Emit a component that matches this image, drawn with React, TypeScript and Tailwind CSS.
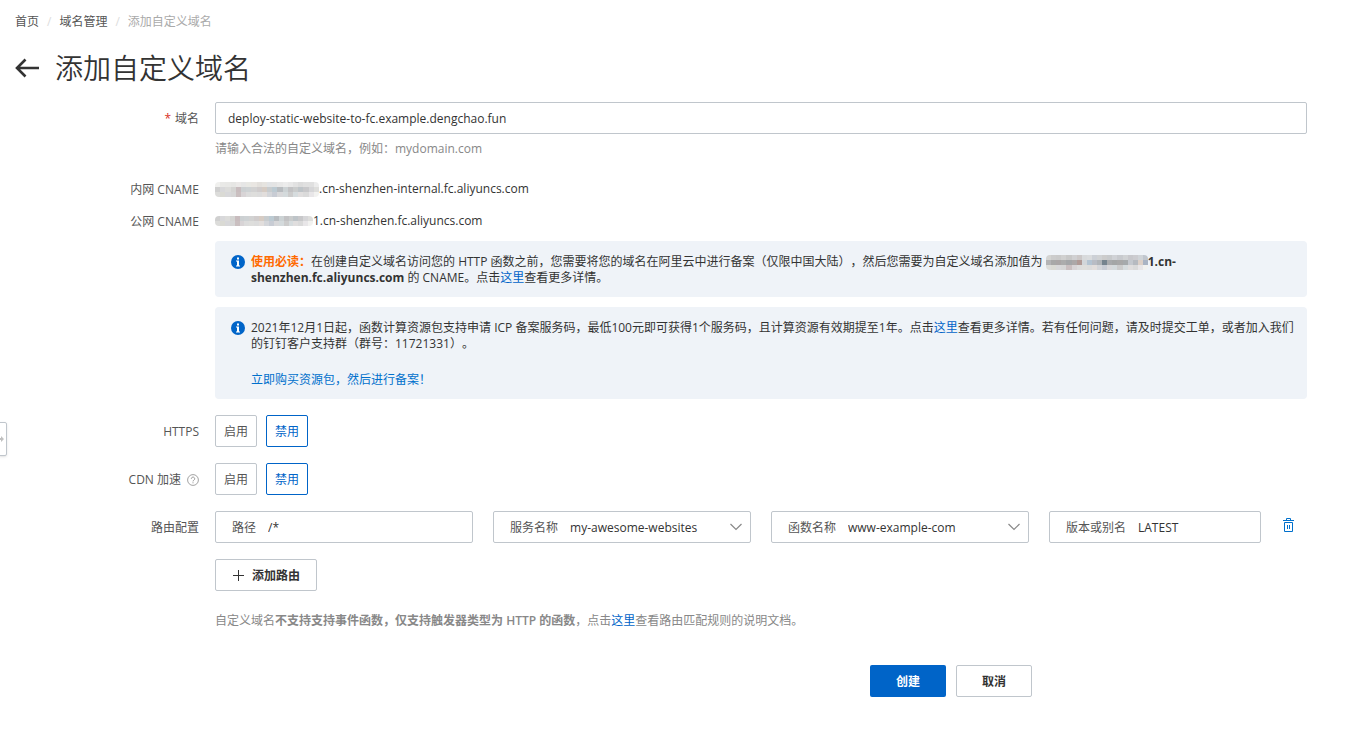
import React, { useState } from 'react';

interface FormRowProps {
  label?: React.ReactNode;
  htmlFor?: string;
  className?: string;
  children: React.ReactNode;
}

const FormRow: React.FC<FormRowProps> = ({ label, htmlFor, className = '', children }) => (
  <div className={`flex gap-4 ${className}`}>
    <label htmlFor={htmlFor} className="flex h-8 w-46 shrink-0 items-center justify-end pt-0.5 text-[#555]">
      {label}
    </label>
    <div className="min-w-0 flex-1">{children}</div>
  </div>
);

// Masked account id, drawn as a grid of grey blocks
const MASK_LIGHT = ['#f0f0ee', '#e9e9e7', '#e8e8e6', '#e6e6e4', '#ebe9e8', '#e6e6e6', '#e8e8e4', '#e9e6e2', '#e3e0dc', '#e6e4e0', '#e2e4e6', '#e4e4e4', '#e8e8e8', '#ececec', '#e8e8e8', '#e2e2e2', '#dcdcdc', '#e0e0e0', '#e0e0e0', '#ececec'];
const MASK_MIDDLE = ['#d0d0d0', '#d8d8da', '#dcdcda', '#d4d4d2', '#c8bcbe', '#ccd0d2', '#ced2d4', '#d2d2d2', '#d0cccc', '#d6ccc4', '#c8ccce', '#bccad2', '#b8bcc0', '#ccd2d4', '#c2c2c4', '#cacccc', '#bec4c8', '#c8c8ca', '#d6d6d8', '#dededc'];
const MASK_BOTTOM = ['#dcdcda', '#dadad4', '#d8d8da', '#d6d6d6', '#cabfc0', '#d8d4d6', '#dcdcdc', '#dededc', '#dcdcdc', '#e2dedc', '#d4d6da', '#c8ccd4', '#d8d8da', '#d4dadc', '#cccccc', '#d6dcde', '#e0dede', '#dadada', '#e8e6e8', '#f2f2f0'];
const MASK_BOLD_TOP = ['#d4d4d2', '#cccccc', '#cacaca', '#d0d0d0', '#c8c8c8', '#d0d0d2', '#ccc8c8', '#d8dadc', '#dadcde', '#ccd0d6', '#d0d2d4', '#cccccc', '#c8cacc', '#d0d2d6', '#c8cace', '#d0d2d4', '#c8c8cc', '#ccccd0', '#d0d4d8', '#c0c6ce'];
const MASK_BOLD_MIDDLE = ['#b4b4b6', '#a8a8a8', '#aaa6a6', '#acacac', '#a4a6a8', '#aca8a8', '#b09a96', '#d2d6da', '#b4c4d2', '#b8bcc4', '#b0b4b8', '#76848e', '#a8aaac', '#a4a6a6', '#a8a8a8', '#a6aaac', '#c4c8ce', '#b6bac0', '#dcd0c8', '#aab4c4'];

const MASK_INTERNAL = [MASK_LIGHT, MASK_MIDDLE, MASK_BOTTOM];
const MASK_PUBLIC = [MASK_MIDDLE, MASK_BOTTOM];
const MASK_NOTICE = [MASK_BOLD_TOP, MASK_BOLD_MIDDLE, MASK_BOTTOM];

const Mask: React.FC<{ rows: string[][]; width?: number }> = ({ rows, width = 104 }) => (
  <svg
    viewBox={`0 0 100 ${rows.length * 5}`}
    preserveAspectRatio="none"
    width={width}
    height={rows.length * 5}
    shapeRendering="crispEdges"
    className="inline-block rounded-sm align-middle"
    aria-hidden="true"
  >
    {rows.map((row, y) =>
      row.map((fill, x) => <rect key={`${y}-${x}`} x={x * 5} y={y * 5} width="5" height="5" fill={fill} />)
    )}
  </svg>
);

const InfoIcon = () => (
  <svg viewBox="0 0 14 14" className="mt-px size-3.5 shrink-0" aria-hidden="true">
    <circle cx="7" cy="7" r="7" fill="#0064c8" />
    <path d="M6 2.5h2v2H6zM5 5.5h3v5h1v1H5v-1h1v-4H5z" fill="#fff" />
  </svg>
);

const HelpIcon = () => (
  <svg viewBox="0 0 12 12" className="ml-1.5 size-3" fill="none" stroke="#999" aria-hidden="true">
    <circle cx="6" cy="6" r="5.4" strokeWidth="0.9" />
    <path d="M4.3 4.8a1.7 1.7 0 1 1 2.6 1.4C6.3 6.5 6 6.7 6 7.4M6 8.3v1" />
  </svg>
);

const Notice: React.FC<{ children: React.ReactNode }> = ({ children }) => (
  <div className="flex gap-1.5 rounded-sm bg-[#eff3f8] pt-[13px] pr-3 pb-[11px] pl-4 leading-4 text-[#333]">
    <InfoIcon />
    <div className="min-w-0 flex-1">{children}</div>
  </div>
);

interface ToggleProps {
  name: string;
  value: boolean;
  onChange: (value: boolean) => void;
}

const Toggle: React.FC<ToggleProps> = ({ name, value, onChange }) => (
  <div role="group" aria-label={name} className="flex gap-[9px]">
    {[true, false].map(option => (
      <button
        key={String(option)}
        type="button"
        aria-pressed={value === option}
        onClick={() => onChange(option)}
        className={`h-8 w-[42px] rounded-xs border pt-0.5 ${value === option ? 'border-[#0064c8] text-[#0064c8]' : 'border-[#c0c6cc] text-[#555]'}`}
      >
        {option ? '启用' : '禁用'}
      </button>
    ))}
  </div>
);

const fieldStyle = 'flex h-8 items-center gap-3 rounded-xs border border-[#c0c6cc] pt-0.5 pl-4';

interface SelectFieldProps {
  id: string;
  label: string;
  value: string;
}

const SelectField: React.FC<SelectFieldProps> = ({ id, label, value }) => (
  <div className={`${fieldStyle} relative min-w-0 flex-1`}>
    <label htmlFor={id} className="shrink-0 text-[#555]">{label}</label>
    <select id={id} className="h-full min-w-0 flex-1 appearance-none bg-transparent pr-8 text-[#333] outline-none">
      <option>{value}</option>
    </select>
    <svg viewBox="0 0 12 8" className="pointer-events-none absolute top-[11px] right-2 h-2 w-3" fill="none" stroke="#888" strokeWidth="1.2" aria-hidden="true">
      <path d="M.5 1 6 6.5 11.5 1" />
    </svg>
  </div>
);

const linkStyle = 'text-[#0064c8]';

export default function App() {
  const [domain, setDomain] = useState('deploy-static-website-to-fc.example.dengchao.fun');
  const [path, setPath] = useState('/*');
  const [version, setVersion] = useState('LATEST');
  const [https, setHttps] = useState(false);
  const [cdn, setCdn] = useState(false);

  return (
    <div className="min-h-screen bg-white pr-[55px] pb-10 pl-[15px] font-['Open_Sans','Noto_Sans_CJK_SC',sans-serif] text-[12px] leading-4 text-[#333] [text-spacing-trim:space-all]">
      <button type="button" aria-label="展开" className="fixed top-[422px] -left-px flex h-[34px] w-2 items-center rounded-r-xs border border-[#c0c6cc] bg-white shadow">
        <svg viewBox="0 0 4 6" className="h-1.5 w-1" fill="#c0c0c0" aria-hidden="true">
          <path d="M0 2h1V0l3 3-3 3V4H0z" />
        </svg>
      </button>

      <nav className="flex gap-2 pt-3.5 text-[#555]">
        <a href="#home">首页</a>
        <span className="text-[#ddd]">/</span>
        <a href="#domains">域名管理</a>
        <span className="text-[#ddd]">/</span>
        <span className="text-[#aaa]">添加自定义域名</span>
      </nav>

      <header className="mt-5 mb-4 flex items-center gap-4">
        <button type="button" aria-label="返回">
          <svg viewBox="0 0 24 20" className="h-5 w-6" fill="none" stroke="#333" strokeWidth="2.6" aria-hidden="true">
            <path d="M10.5 1.5 2 10l8.5 8.5M2 10h22" />
          </svg>
        </button>
        <h1 className="text-[28px] leading-9 font-[350]">添加自定义域名</h1>
      </header>

      <form onSubmit={e => e.preventDefault()}>
        <FormRow htmlFor="domain" label={<><span className="mr-1 text-[#d93026]">*</span>域名</>}>
          <input
            id="domain"
            value={domain}
            onChange={e => setDomain(e.target.value)}
            className="block h-8 w-full rounded-xs border border-[#c0c6cc] px-3 outline-none"
          />
          <p className="mt-[7px] text-[#888]">请输入合法的自定义域名，例如：mydomain.com</p>
        </FormRow>

        <FormRow label="内网 CNAME" className="mt-4">
          <div className="flex h-8 items-center">
            <Mask rows={MASK_INTERNAL} />
            <span>.cn-shenzhen-internal.fc.aliyuncs.com</span>
          </div>
        </FormRow>

        <FormRow label="公网 CNAME">
          <div className="flex h-8 items-center">
            <Mask rows={MASK_PUBLIC} width={98} />
            <span>1.cn-shenzhen.fc.aliyuncs.com</span>
          </div>
          <div className="mt-1 space-y-2.5">
            <Notice>
              <strong className="text-[#ff6a00]">使用必读：</strong>
              在创建自定义域名访问您的 HTTP 函数之前，您需要将您的域名在阿里云中进行备案（仅限中国大陆），然后您需要为自定义域名添加值为{' '}
              <strong><Mask rows={MASK_NOTICE} width={102} />1.cn-shenzhen.fc.aliyuncs.com</strong> 的 CNAME。点击
              <a href="#cname" className={linkStyle}>这里</a>查看更多详情。
            </Notice>
            <Notice>
              <p>
                2021年12月1日起，函数计算资源包支持申请 ICP 备案服务码，最低100元即可获得1个服务码，且计算资源有效期提至1年。点击
                <a href="#icp" className={linkStyle}>这里</a>查看更多详情。若有任何问题，请及时提交工单，或者加入我们的钉钉客户支持群（群号：11721331）。
              </p>
              <a href="#buy" className="mt-5 block text-[#0070cc]">立即购买资源包，然后进行备案！</a>
            </Notice>
          </div>
        </FormRow>

        <FormRow label="HTTPS" className="mt-4">
          <Toggle name="HTTPS" value={https} onChange={setHttps} />
        </FormRow>

        <FormRow label={<>CDN 加速 <HelpIcon /></>} className="mt-4">
          <Toggle name="CDN 加速" value={cdn} onChange={setCdn} />
        </FormRow>

        <FormRow label="路由配置" className="mt-4">
          <div className="flex items-center">
            <div className="flex min-w-0 flex-1 gap-5">
              <div className={`${fieldStyle} min-w-0 flex-1`}>
                <label htmlFor="path" className="shrink-0 text-[#555]">路径</label>
                <input id="path" value={path} onChange={e => setPath(e.target.value)} className="min-w-0 flex-1 outline-none" />
              </div>
              <SelectField id="service" label="服务名称" value="my-awesome-websites" />
              <SelectField id="function" label="函数名称" value="www-example-com" />
              <div className={`${fieldStyle} w-[212px]`}>
                <label htmlFor="version" className="shrink-0 text-[#555]">版本或别名</label>
                <input id="version" value={version} onChange={e => setVersion(e.target.value)} className="min-w-0 flex-1 outline-none" />
              </div>
            </div>
            <button type="button" aria-label="删除" className="flex h-8 w-[46px] justify-center pt-[7px] pl-2">
              <svg viewBox="0 0 11 14" className="h-3.5 w-[11px]" fill="none" stroke="#0070cc" aria-hidden="true">
                <path d="M0 2.5h11M3.5 2V.5h4V2M1.5 4.500v9h8v-9zM4.500 7v4M6.500 7v4" />
              </svg>
            </button>
          </div>

          <button type="button" className="mt-4 flex h-8 items-center gap-2 rounded-xs border border-[#c0c6cc] px-4 pt-0.5 font-semibold">
            <svg viewBox="0 0 12 12" className="mb-0.5 size-3" fill="none" stroke="#333" aria-hidden="true">
              <path d="M6.5 1v11M1 6.5h11" />
            </svg>
            添加路由
          </button>

          <p className="mt-[22px] text-[#888]">
            自定义域名<strong className="font-semibold">不支持支持事件函数，仅支持触发器类型为 HTTP 的函数</strong>，点击
            <a href="#rules" className={linkStyle}>这里</a>查看路由匹配规则的说明文档。
          </p>
        </FormRow>

        <FormRow className="mt-9">
          <div className="flex justify-center gap-2.5 pl-[380px]">
            <button type="submit" className="h-8 w-[76px] rounded-xs bg-[#0064c8] pt-0.5 font-semibold text-white">创建</button>
            <button type="button" className="h-8 w-[76px] rounded-xs border border-[#c0c6cc] pt-0.5 font-semibold">取消</button>
          </div>
        </FormRow>
      </form>
    </div>
  );
}
